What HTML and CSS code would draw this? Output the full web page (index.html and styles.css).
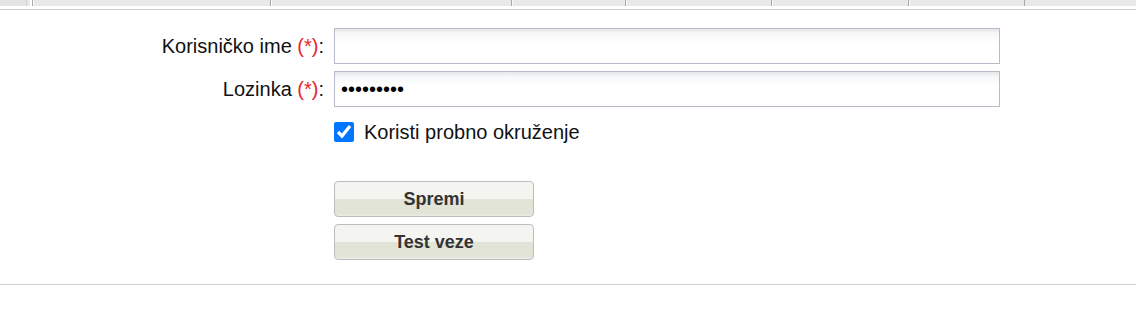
FILE: index.html
```html
<!DOCTYPE html>
<html>
<head>
<meta charset="utf-8">
<link rel="stylesheet" href="styles.css">
</head>
<body>
<div class="topbar">
  <div class="cell c0"></div>
  <div class="cell c1"></div>
  <div class="cell c2"></div>
  <div class="cell c3"></div>
  <div class="cell c4"></div>
  <div class="cell c5"></div>
  <div class="cell c6"></div>
  <div class="cell c7"></div>
</div>
<form class="form">
  <label class="lbl" for="user">Korisničko ime <span class="req">(*)</span>:</label>
  <input class="field" id="user" type="text" value="">
  <label class="lbl" for="pass">Lozinka <span class="req">(*)</span>:</label>
  <input class="field" id="pass" type="password" value="123456789">
  <div class="spacer"></div>
  <label class="check"><input type="checkbox" checked><span>Koristi probno okruženje</span></label>
  <div class="spacer"></div>
  <div class="buttons">
    <button type="button" class="btn">Spremi</button>
    <button type="button" class="btn">Test veze</button>
  </div>
</form>
<div class="rule"></div>
</body>
</html>
```
FILE: styles.css
```css
html, body {
  margin: 0;
  padding: 0;
  background: #fff;
  font-family: "Liberation Sans", Arial, sans-serif;
}
.topbar {
  display: flex;
  height: 6px;
  background: #e9e9e9;
  border-bottom: 3px solid #fff;
  box-shadow: 0 1px 0 #cfcfcf;
  margin-bottom: 1px;
}
.cell {
  height: 6px;
  background: #e9e9e9;
  border-left: 1px solid #fafafa;
  border-right: 1px solid #a9a9a9;
  box-sizing: border-box;
}
.c0 { width: 27px; background: #e4e4e4; border-left: none; border-right: 1px solid #d2d2d2; }
.c1 { width: 3px; background: #fff; border: none; border-right: 1px solid #a9a9a9; margin-left: 3px; }
.c2 { width: 238px; }
.c3 { width: 241px; }
.c4 { width: 114px; }
.c5 { width: 146px; }
.c6 { width: 137px; }
.c7 { width: 116px; }
.form {
  display: grid;
  grid-template-columns: 324px 666px;
  column-gap: 10px;
  row-gap: 7px;
  margin-top: 19px;
  font-size: 20px;
  color: #111;
}
.lbl {
  justify-self: end;
  align-self: center;
  white-space: nowrap;
}
.req { color: #e8252b; }
.field {
  box-sizing: border-box;
  height: 36px;
  border: 1px solid #b9b9c9;
  background: linear-gradient(to bottom, #e4e6ea 0, #f5f6f6 4px, #fff 14px);
  font-family: "Liberation Sans", Arial, sans-serif;
  font-size: 20px;
  padding: 0 6px;
  margin: 0;
  outline: none;
  color: #000;
}
.spacer { grid-column: 1; }
.check {
  grid-column: 2;
  display: flex;
  align-items: center;
  gap: 10px;
  margin-top: 5px;
  height: 26px;
}
.check input {
  width: 20px;
  height: 20px;
  margin: 0;
  accent-color: #0075ff;
}
.buttons {
  grid-column: 2;
  display: flex;
  flex-direction: column;
  gap: 7px;
  margin-top: 29px;
}
.btn {
  width: 200px;
  height: 36px;
  box-sizing: border-box;
  border: 1px solid #bdbdbd;
  border-radius: 4px;
  background: linear-gradient(to bottom, #f4f5f0 0, #f4f5f0 50%, #e1e4d6 50%, #e1e4d6 92%, #eceee6 100%);
  font-family: "Liberation Sans", Arial, sans-serif;
  font-weight: bold;
  font-size: 18px;
  color: #333;
  padding: 0;
}
.rule {
  margin-top: 24px;
  border-top: 1px solid #d0d0d0;
}
```
